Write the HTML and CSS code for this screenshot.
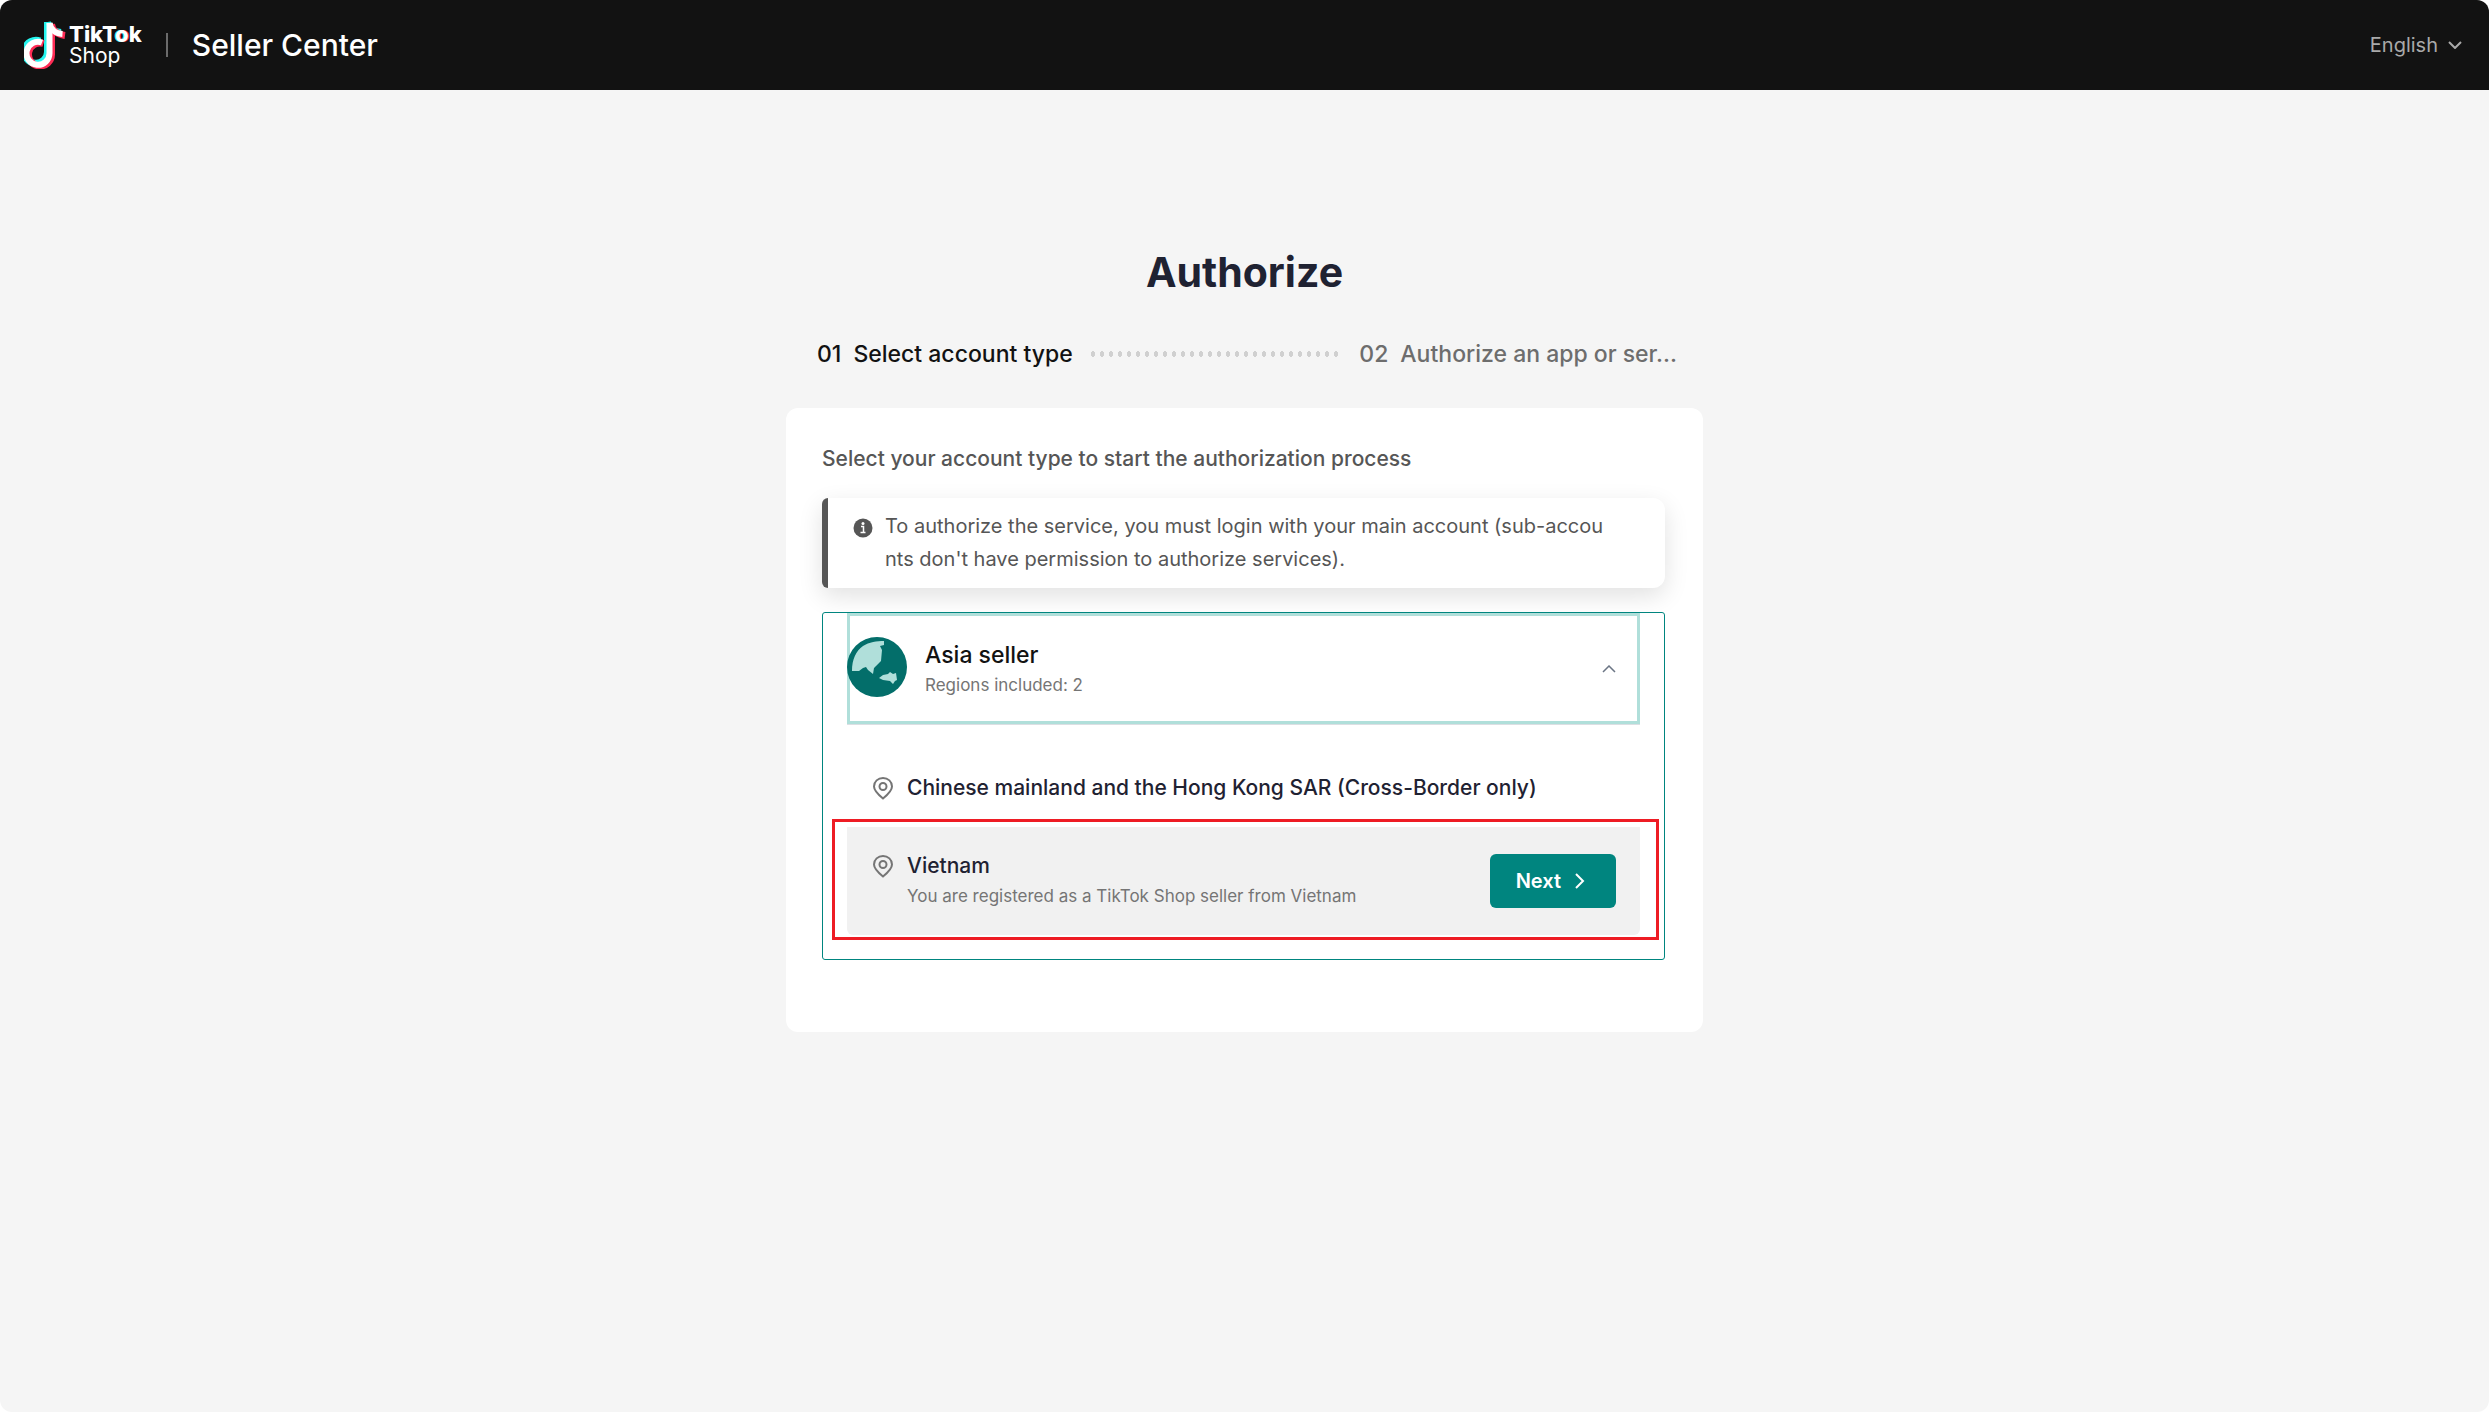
FILE: index.html
```html
<!DOCTYPE html>
<html lang="en">
<head>
    <meta charset="UTF-8">
    <meta name="viewport" content="width=device-width, initial-scale=1.0">
    <title>TikTok Shop Seller Center</title>
    <link rel="stylesheet" href="styles.css">
</head>
<body>
    <div class="page">
        <header class="header">
            <a href="#" class="logo">
                <svg class="logo-note" width="42" height="48" viewBox="0 0 42 48" aria-hidden="true">
                    <g fill="none" stroke-width="7">
                        <g stroke="#25f4ee">
                            <path d="M16 20A11.500 11.500 0 1 0 23.500 31V1"/>
                            <path d="M23.500 1C24.500 7 30 11 37 11.500"/>
                        </g>
                        <g stroke="#fe2c55">
                            <path d="M19.500 22.500A11.500 11.500 0 1 0 27.500 33.500V3"/>
                            <path d="M27.500 3C28 9 33 13.500 41 14.500"/>
                        </g>
                        <g stroke="#fff" stroke-width="6">
                            <path d="M18 21.500A11.500 11.500 0 1 0 25.500 32V2"/>
                            <path d="M25.500 2C26.500 8 31 12.500 38.500 13"/>
                        </g>
                    </g>
                </svg>
                <span class="logo-text">
                    <span class="logo-brand">TikT<span class="logo-o">o</span>k</span>
                    <span class="logo-shop">Shop</span>
                </span>
            </a>
            <span class="divider"></span>
            <span class="header-title">Seller Center</span>
            <button type="button" class="language">
                English
                <svg width="14" height="8" viewBox="0 0 14 8" aria-hidden="true">
                    <path d="M1 1l6 6 6-6" fill="none" stroke="currentColor" stroke-width="2"/>
                </svg>
            </button>
        </header>

        <main class="container">
            <h1>Authorize</h1>

            <ol class="steps">
                <li class="step active"><span>01</span><span>Select account type</span></li>
                <li class="dots" aria-hidden="true"></li>
                <li class="step"><span>02</span><span>Authorize an app or ser...</span></li>
            </ol>

            <section class="card">
                <h2>Select your account type to start the authorization process</h2>

                <div class="notice">
                    <svg width="20" height="20" viewBox="0 0 20 20" aria-hidden="true">
                        <circle cx="10" cy="10" r="9.500" fill="#565656"/>
                        <circle cx="10" cy="5.500" r="1.500" fill="#fff"/>
                        <path d="M8 8.500h2.500v6M7.500 14.500h5" fill="none" stroke="#fff" stroke-width="1.500"/>
                    </svg>
                    <p>To authorize the service, you must login with your main account (sub-accounts don't have permission to authorize services).</p>
                </div>

                <div class="region-group">
                    <button type="button" class="group-header" aria-expanded="true">
                        <svg class="globe" width="60" height="60" viewBox="0 0 60 60" aria-hidden="true">
                            <circle cx="30" cy="30" r="30" fill="#036e6a"/>
                            <path fill="#b0dfda" d="M5 34C5 22 9 14 16 9C22 5 30 4 37 4V8L33 9L35 13L34 24L27 31L26 37L21 33L19 30L16 31L12 34Z"/>
                            <path fill="#b0dfda" d="M32 41L36 38L41 37L43 35L46 37L49 36L50 43L48 44L46 47L43 44L36 43Z"/>
                        </svg>
                        <span class="group-text">
                            <span class="group-name">Asia seller</span>
                            <span class="group-note">Regions included: 2</span>
                        </span>
                        <svg class="arrow" width="14" height="8" viewBox="0 0 14 8" aria-hidden="true">
                            <path d="M1 7l6-6 6 6" fill="none" stroke="#6b7584" stroke-width="1.500"/>
                        </svg>
                    </button>

                    <ul class="regions">
                        <li class="region">
                            <svg class="pin" width="20" height="23" viewBox="0 0 20 23" aria-hidden="true">
                                <path d="M10 21.500C4.500 17 1 13.500 1 9.500C1 4.500 5 1 10 1s9 3.500 9 8.500c0 4-3.500 7.500-9 12z"/>
                                <circle cx="10" cy="9.500" r="3.500"/>
                            </svg>
                            <div class="region-text">
                                <span class="region-name">Chinese mainland and the Hong Kong SAR (Cross-Border only)</span>
                            </div>
                        </li>
                        <li class="region selected">
                            <svg class="pin" width="20" height="23" viewBox="0 0 20 23" aria-hidden="true">
                                <path d="M10 21.500C4.500 17 1 13.500 1 9.500C1 4.500 5 1 10 1s9 3.500 9 8.500c0 4-3.500 7.500-9 12z"/>
                                <circle cx="10" cy="9.500" r="3.500"/>
                            </svg>
                            <div class="region-text">
                                <span class="region-name">Vietnam</span>
                                <span class="region-note">You are registered as a TikTok Shop seller from Vietnam</span>
                            </div>
                            <button type="button" class="next">
                                Next
                                <svg width="10" height="16" viewBox="0 0 10 16" aria-hidden="true">
                                    <path d="M1 1l7 7-7 7" fill="none" stroke="currentColor" stroke-width="2"/>
                                </svg>
                            </button>
                            <span class="highlight"></span>
                        </li>
                    </ul>
                </div>
            </section>
        </main>
    </div>
</body>
</html>
```
FILE: styles.css
```css
* {
    box-sizing: border-box;
}
body {
    margin: 0;
    background-color: #fff;
    color: #121212;
    font-family: Inter, sans-serif;
    font-size: 20px;
}
button {
    font-family: inherit;
    border: none;
    background: none;
    padding: 0;
    cursor: pointer;
}
svg {
    flex-shrink: 0;
}
h1, h2, p, ol, ul {
    margin: 0;
    padding: 0;
    list-style: none;
}
.page {
    min-height: 100vh;
    background-color: #f5f5f5;
    border-radius: 12px;
    overflow: hidden;
}

/* Header */
.header {
    display: flex;
    align-items: center;
    height: 90px;
    padding: 0 27px 0 24px;
    background-color: #121212;
    color: #fff;
}
.logo {
    display: flex;
    align-items: center;
    gap: 3px;
    color: #fff;
    text-decoration: none;
}
.logo-text {
    display: flex;
    flex-direction: column;
    line-height: 22px;
}
.logo-brand {
    font-size: 22px;
    font-weight: 800;
}
.logo-o {
    text-shadow: -1px 0 #25f4ee, 1px 0 #fe2c55;
}
.logo-shop {
    font-size: 21px;
}
.divider {
    width: 2px;
    height: 24px;
    margin: 0 24px;
    background-color: #6b6b6b;
}
.header-title {
    font-size: 30px;
    font-weight: 500;
    line-height: 36px;
}
.language {
    display: flex;
    align-items: center;
    gap: 10px;
    margin-left: auto;
    color: #a9a9a9;
    font-size: 20px;
}

/* Steps */
.container {
    max-width: 917px;
    margin: 0 auto;
    padding-top: 152px;
}
h1 {
    text-align: center;
    font-size: 41px;
    font-weight: 700;
    line-height: 60px;
    color: #1f2232;
}
.steps {
    display: flex;
    align-items: center;
    margin-top: 34px;
    padding: 0 26px 0 31px;
    font-size: 23px;
    font-weight: 500;
    line-height: 36px;
}
.step {
    display: flex;
    gap: 12px;
    color: #6d6d6d;
    white-space: nowrap;
}
.step.active {
    color: #121212;
}
.dots {
    flex: 1;
    height: 6px;
    margin: 0 21px 0 18px;
    background-image: radial-gradient(ellipse 2px 3px at 2px 3px, #d0d0d0 90%, transparent);
    background-size: 9px 6px;
}

/* Card */
.card {
    margin-top: 36px;
    padding: 33px 38px 72px 36px;
    background-color: #fff;
    border-radius: 12px;
}
h2 {
    font-size: 21px;
    font-weight: 450;
    line-height: 36px;
    color: #565656;
}
.notice {
    display: flex;
    gap: 12px;
    margin-top: 21px;
    padding: 12px 54px 12px 25px;
    background-color: #fff;
    border-left: 6px solid #565656;
    border-radius: 6px 12px 12px 6px;
    box-shadow: 0 8px 24px rgba(0, 0, 0, 0.12);
    color: #565656;
    line-height: 33px;
}
.notice svg {
    margin-top: 8px;
}
.notice p {
    word-break: break-all;
}
.region-group {
    margin-top: 24px;
    padding: 0 24px 24px;
    border: 1px solid #00857f;
    border-radius: 3px;
}
.group-header {
    display: flex;
    align-items: center;
    width: 100%;
    height: 111px;
    padding-right: 21px;
    border: 3px solid #b0dfda;
    text-align: left;
}
.globe {
    margin: 0 0 3px -3px;
}
.group-text {
    display: flex;
    flex-direction: column;
    margin-left: 18px;
}
.group-name {
    font-size: 23px;
    font-weight: 500;
    line-height: 33px;
    color: #121212;
}
.group-note {
    font-size: 17px;
    line-height: 27px;
    color: #757575;
}
.arrow {
    margin-left: auto;
}

/* Regions */
.regions {
    padding-top: 24px;
    border-top: 1px solid #dcdfe3;
}
.region {
    position: relative;
    display: flex;
    padding: 24px 24px 24px 26px;
}
.region.selected {
    background-color: #f1f1f1;
    border-radius: 0 0 6px 6px;
}
.pin {
    margin-top: 4px;
    fill: none;
    stroke: #757575;
    stroke-width: 2;
}
.region-text {
    display: flex;
    flex-direction: column;
    margin-left: 14px;
}
.region-name {
    font-size: 21px;
    font-weight: 450;
    line-height: 30px;
    color: #1f2232;
}
.region-note {
    font-size: 17px;
    line-height: 30px;
    color: #757575;
}
.next {
    display: flex;
    align-items: center;
    gap: 14px;
    height: 54px;
    margin: 3px 0 0 auto;
    padding: 0 31px 0 26px;
    background-color: #00857f;
    border-radius: 6px;
    color: #fff;
    font-size: 20px;
    font-weight: 600;
}
.next:hover {
    background-color: #036e6a;
}
.highlight {
    position: absolute;
    top: -8px;
    right: -19px;
    bottom: -5px;
    left: -15px;
    border: 3px solid #ee1c24;
    pointer-events: none;
}
```
